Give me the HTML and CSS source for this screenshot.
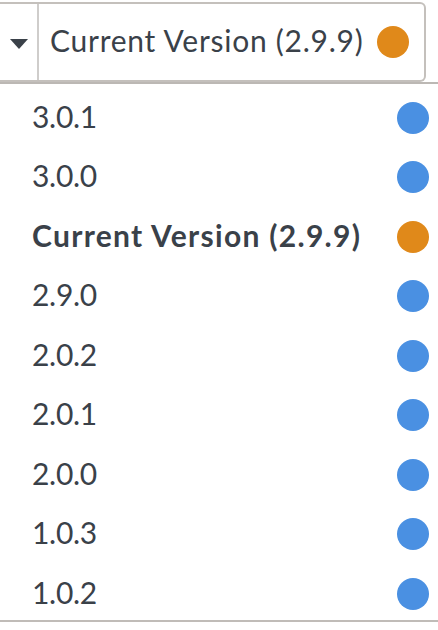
FILE: index.html
```html
<!DOCTYPE html>
<html>
<head>
<meta charset="utf-8">
<link rel="stylesheet" href="styles.css">
</head>
<body>
<div class="picker">
  <div class="select">
    <div class="caret-cell"><span class="caret"></span></div>
    <div class="value">
      <span class="label label-wide">Current Version (2.9.9)</span>
      <span class="dot dot-orange"></span>
    </div>
  </div>
  <div class="menu">
    <ul class="options">
      <li class="option"><span class="label">3.0.1</span><span class="dot dot-blue"></span></li>
      <li class="option"><span class="label">3.0.0</span><span class="dot dot-blue"></span></li>
      <li class="option current"><span class="label label-wide">Current Version (2.9.9)</span><span class="dot dot-orange"></span></li>
      <li class="option"><span class="label">2.9.0</span><span class="dot dot-blue"></span></li>
      <li class="option"><span class="label">2.0.2</span><span class="dot dot-blue"></span></li>
      <li class="option"><span class="label">2.0.1</span><span class="dot dot-blue"></span></li>
      <li class="option"><span class="label">2.0.0</span><span class="dot dot-blue"></span></li>
      <li class="option"><span class="label">1.0.3</span><span class="dot dot-blue"></span></li>
      <li class="option"><span class="label">1.0.2</span><span class="dot dot-blue"></span></li>
    </ul>
  </div>
</div>
</body>
</html>
```
FILE: styles.css
```css
html, body {
  margin: 0;
  padding: 0;
  background: #ffffff;
}
body {
  font-family: Lato, "Open Sans", "Liberation Sans", sans-serif;
  color: #3a4149;
}
.picker {
  width: 438px;
  padding-top: 2px;
}
.select {
  display: flex;
  width: 424px;
  height: 76px;
  border: 2px solid #c4c0bc;
  border-left: none;
  border-radius: 0 6px 6px 0;
  box-sizing: content-box;
}
.caret-cell {
  width: 37px;
  flex: none;
  border-right: 2px solid #cfcdcb;
  display: flex;
  align-items: center;
  justify-content: center;
}
.caret {
  width: 0;
  height: 0;
  border-left: 9px solid transparent;
  border-right: 9px solid transparent;
  border-top: 10px solid #3a4149;
  margin-top: 3px;
}
.value {
  flex: 1;
  display: flex;
  align-items: center;
  justify-content: space-between;
  padding: 0 15px 0 11px;
}
.label {
  font-size: 30px;
  line-height: 1;
  letter-spacing: -0.3px;
  padding-bottom: 4px;
}
.label-wide {
  letter-spacing: 0.75px;
}
.dot {
  width: 32px;
  height: 32px;
  border-radius: 50%;
  flex: none;
}
.dot-orange { background: #e0891a; }
.dot-blue { background: #4a90e2; }
.menu {
  border-top: 2px solid #bcb8b4;
  border-bottom: 2px solid #c0bcb8;
  height: 536px;
  overflow: hidden;
}
.options {
  list-style: none;
  margin: 0;
  padding: 4px 0 0 0;
}
.option {
  height: 59.5px;
  display: flex;
  align-items: center;
  justify-content: space-between;
  padding: 0 9px 0 32px;
}
.option.current .label {
  font-weight: 700;
  letter-spacing: 1.3px;
}
```
